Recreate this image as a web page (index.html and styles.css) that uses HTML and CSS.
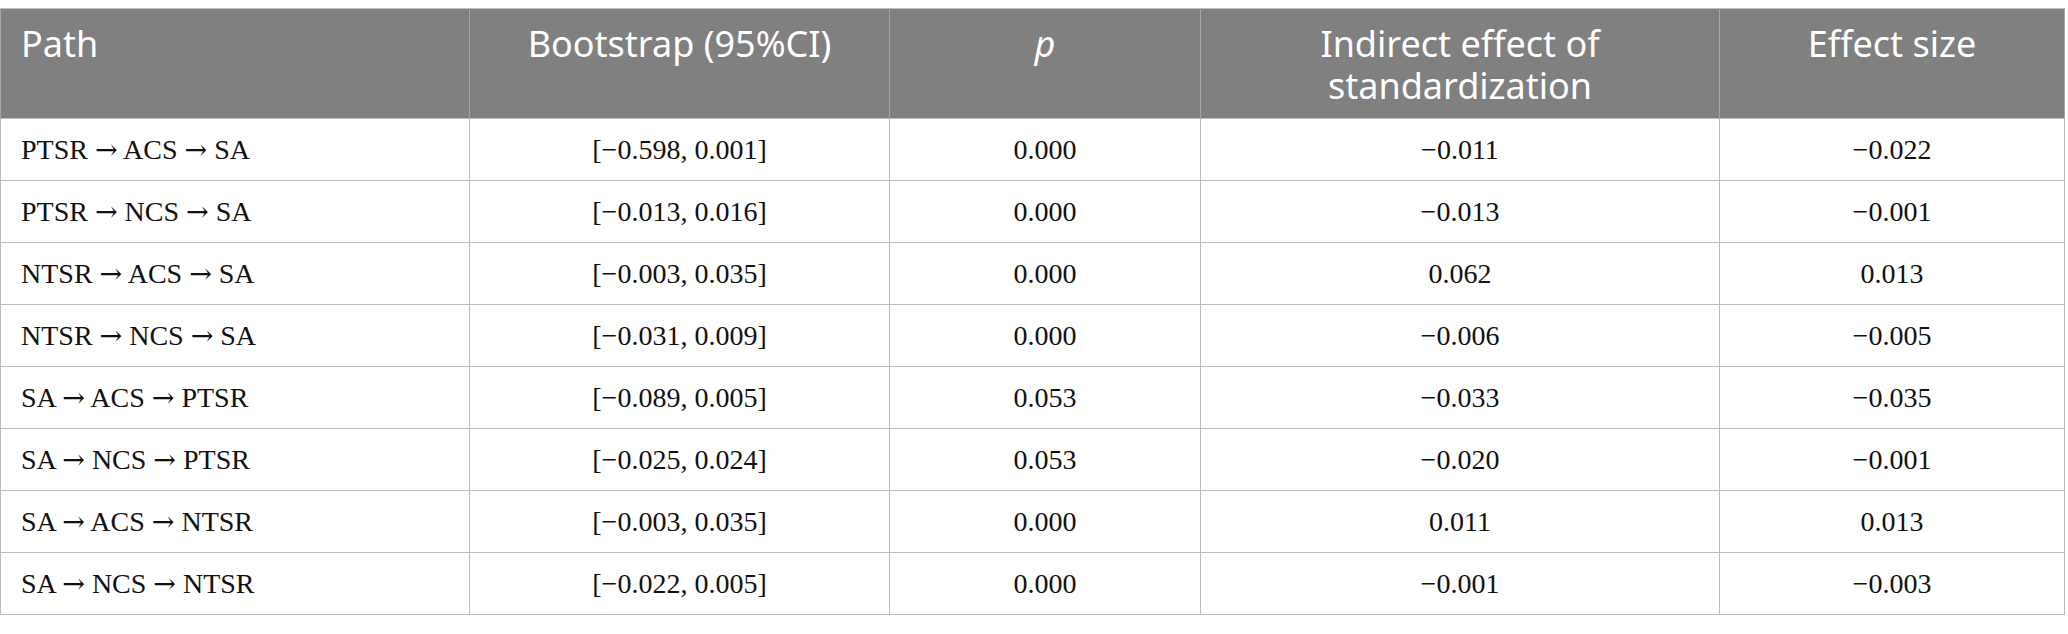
FILE: index.html
```html
<!DOCTYPE html>
<html lang="en">
<head>
<meta charset="utf-8">
<title>Indirect effects</title>
<link rel="stylesheet" href="styles.css">
</head>
<body>
<div class="wrap">
<table class="data">
  <colgroup>
    <col class="c1"><col class="c2"><col class="c3"><col class="c4"><col class="c5">
  </colgroup>
  <thead>
    <tr>
      <th class="left">Path</th>
      <th>Bootstrap (95%CI)</th>
      <th><i>p</i></th>
      <th>Indirect effect of<br>standardization</th>
      <th>Effect size</th>
    </tr>
  </thead>
  <tbody>
    <tr><td class="left">PTSR <span class="arr">→</span> ACS <span class="arr">→</span> SA</td><td>[−0.598, 0.001]</td><td>0.000</td><td>−0.011</td><td>−0.022</td></tr>
    <tr><td class="left">PTSR <span class="arr">→</span> NCS <span class="arr">→</span> SA</td><td>[−0.013, 0.016]</td><td>0.000</td><td>−0.013</td><td>−0.001</td></tr>
    <tr><td class="left">NTSR <span class="arr">→</span> ACS <span class="arr">→</span> SA</td><td>[−0.003, 0.035]</td><td>0.000</td><td>0.062</td><td>0.013</td></tr>
    <tr><td class="left">NTSR <span class="arr">→</span> NCS <span class="arr">→</span> SA</td><td>[−0.031, 0.009]</td><td>0.000</td><td>−0.006</td><td>−0.005</td></tr>
    <tr><td class="left">SA <span class="arr">→</span> ACS <span class="arr">→</span> PTSR</td><td>[−0.089, 0.005]</td><td>0.053</td><td>−0.033</td><td>−0.035</td></tr>
    <tr><td class="left">SA <span class="arr">→</span> NCS <span class="arr">→</span> PTSR</td><td>[−0.025, 0.024]</td><td>0.053</td><td>−0.020</td><td>−0.001</td></tr>
    <tr><td class="left">SA <span class="arr">→</span> ACS <span class="arr">→</span> NTSR</td><td>[−0.003, 0.035]</td><td>0.000</td><td>0.011</td><td>0.013</td></tr>
    <tr><td class="left">SA <span class="arr">→</span> NCS <span class="arr">→</span> NTSR</td><td>[−0.022, 0.005]</td><td>0.000</td><td>−0.001</td><td>−0.003</td></tr>
  </tbody>
</table>
</div>
</body>
</html>
```
FILE: styles.css
```css
html, body {
  margin: 0;
  padding: 0;
  background: #ffffff;
}
.wrap {
  padding-top: 8px;
}
.data {
  width: 2064px;
  table-layout: fixed;
  border-collapse: collapse;
  border: 1px solid #bdbdbd;
}
.c1 { width: 469px; }
.c2 { width: 420px; }
.c3 { width: 311px; }
.c4 { width: 519px; }
.c5 { width: 345px; }
.data th {
  background: #7f807f;
  color: #ffffff;
  font-family: "Noto Sans", "Open Sans", sans-serif;
  font-weight: 400;
  font-size: 36px;
  line-height: 42px;
  text-align: center;
  vertical-align: top;
  padding: 14px 20px 11px;
  border: 1px solid #a6a6a6;
  border-top-color: #bdbdbd;
  border-bottom-color: #bdbdbd;
}
.data td {
  font-family: "Liberation Serif", "Times New Roman", serif;
  font-size: 28px;
  color: #111111;
  text-align: center;
  vertical-align: middle;
  height: 62px;
  padding: 0 20px;
  border: 1px solid #bdbdbd;
  box-sizing: border-box;
}
.data .left {
  text-align: left;
}
.arr {
  font-family: "DejaVu Serif", serif;
  font-size: 27px;
}
```
